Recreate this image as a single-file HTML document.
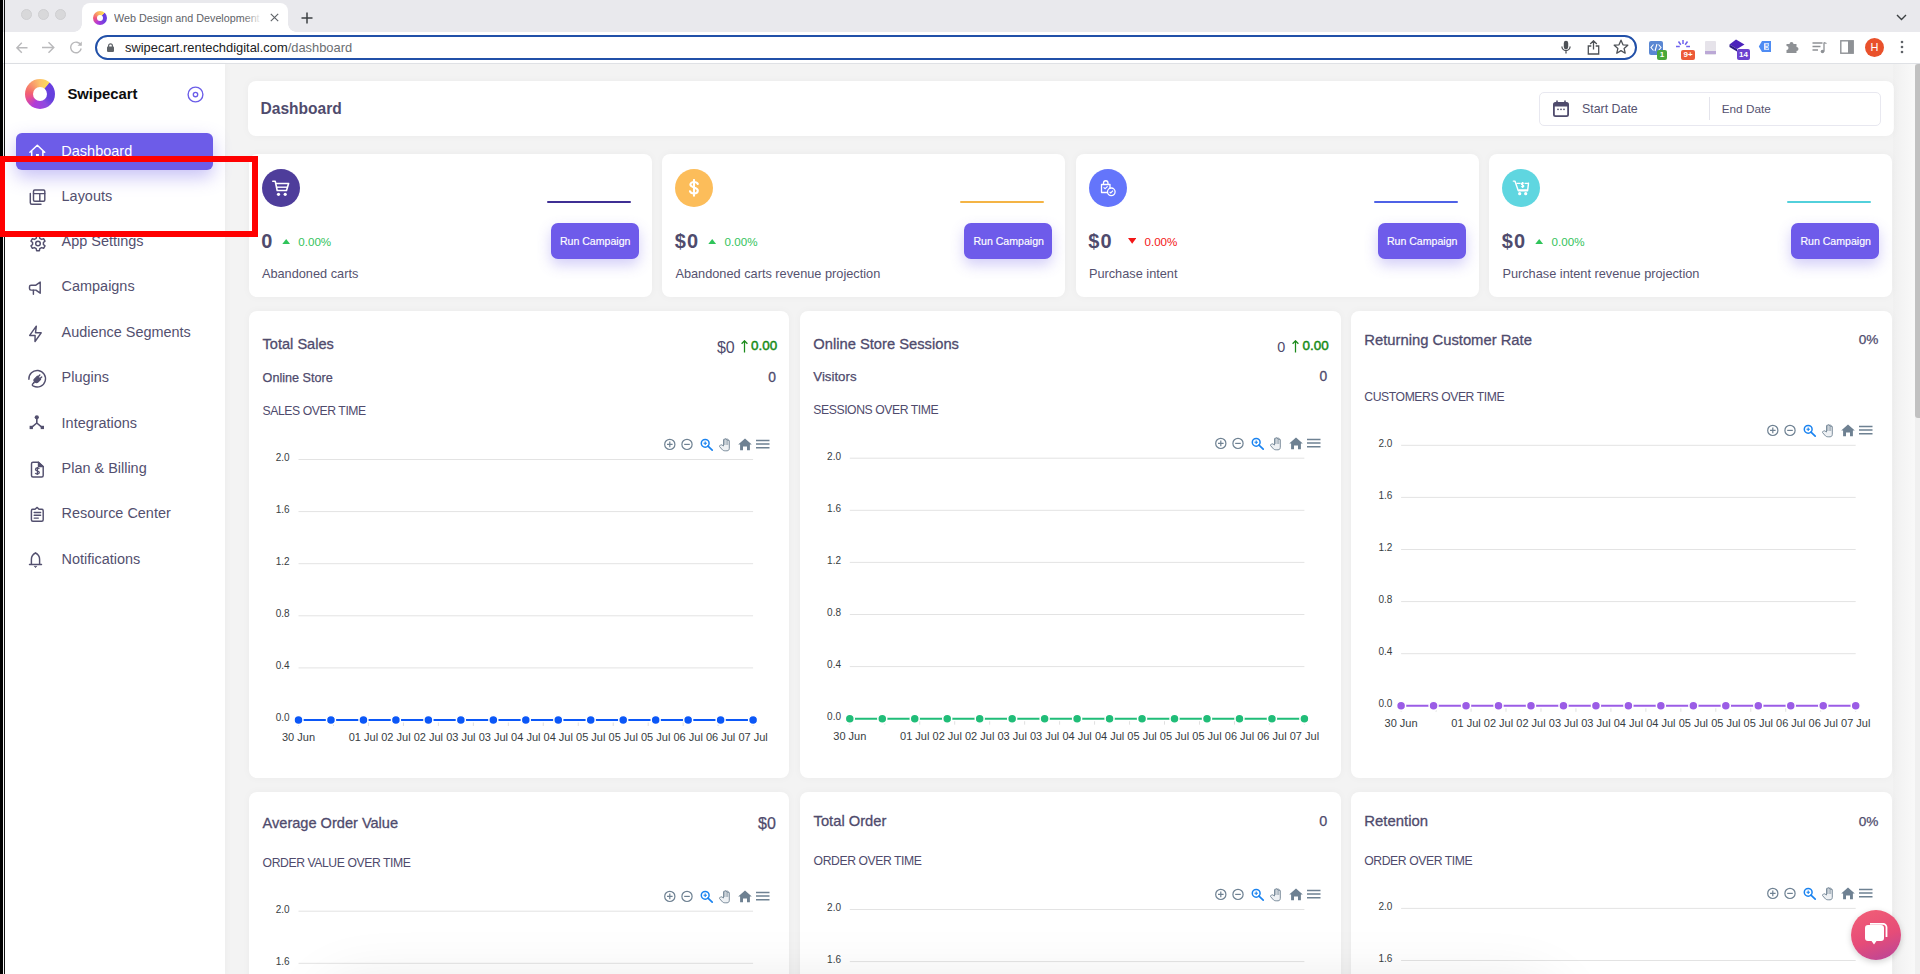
<!DOCTYPE html><html><head><meta charset="utf-8"><style>*{margin:0;padding:0;box-sizing:border-box}
html,body{width:1920px;height:974px;overflow:hidden;background:#f3f3f3;font-family:"Liberation Sans",sans-serif;position:relative}
.card{position:absolute;background:#fff;border-radius:8px;box-shadow:0 0 8px rgba(0,0,0,0.035)}
</style></head><body><div style="position:absolute;left:0;top:0;width:1920px;height:32px;background:#e9e9ed"></div><div style="position:absolute;left:20.5px;top:9px;width:11px;height:11px;border-radius:50%;background:#d8d8da;border:0.5px solid #cfcfd2"></div><div style="position:absolute;left:37.5px;top:9px;width:11px;height:11px;border-radius:50%;background:#d8d8da;border:0.5px solid #cfcfd2"></div><div style="position:absolute;left:54.5px;top:9px;width:11px;height:11px;border-radius:50%;background:#d8d8da;border:0.5px solid #cfcfd2"></div><div style="position:absolute;left:82px;top:3px;width:206px;height:29px;background:#fff;border-radius:8px 8px 0 0"></div>
<div style="position:absolute;left:74px;top:24px;width:8px;height:8px;background:radial-gradient(circle at 0 0,rgba(255,255,255,0) 7.5px,#fff 8px)"></div>
<div style="position:absolute;left:288px;top:24px;width:8px;height:8px;background:radial-gradient(circle at 100% 0,rgba(255,255,255,0) 7.5px,#fff 8px)"></div>
<div style="position:absolute;left:93px;top:11px;width:14px;height:14px;border-radius:50%;background:conic-gradient(#fcc35e 0deg,#fbd95a 40deg,#6a3de0 45deg,#6a3fe0 120deg,#b43ad8 210deg,#f0577a 270deg,#f99a66 320deg,#fcc35e 360deg)"></div>
<div style="position:absolute;left:97px;top:15px;width:6px;height:6px;border-radius:50%;background:#fff"></div>
<div style="position:absolute;left:114.00px;top:10.50px;font:normal 10.75px/14px 'Liberation Sans',sans-serif;color:#5f6368;letter-spacing:0px;white-space:nowrap;width:150px;overflow:hidden">Web Design and Development (</div>
<div style="position:absolute;left:244px;top:8px;width:22px;height:18px;background:linear-gradient(90deg,rgba(255,255,255,0),#fff 80%)"></div><svg style="position:absolute;left:270px;top:13px" width="9" height="9" viewBox="0 0 9 9"><path d="M0.8 0.8L8.2 8.2M8.2 0.8L0.8 8.2" stroke="#5f6368" stroke-width="1.15"/></svg><svg style="position:absolute;left:301px;top:12px" width="12" height="12" viewBox="0 0 12 12"><path d="M6 0.5V11.5M0.5 6H11.5" stroke="#3c4043" stroke-width="1.5"/></svg><svg style="position:absolute;left:1896px;top:14px" width="11" height="7" viewBox="0 0 11 7"><path d="M1 1L5.5 5.5L10 1" stroke="#3c4043" stroke-width="1.4" fill="none"/></svg><div style="position:absolute;left:0;top:32px;width:1920px;height:31px;background:#fff"></div><svg style="position:absolute;left:15.5px;top:41.5px" width="12" height="12" viewBox="0 0 12 12"><path d="M11.5 5.8H1.2M5.8 0.8L0.9 5.8L5.8 10.8" stroke="#b9b9bb" stroke-width="1.4" fill="none"/></svg><svg style="position:absolute;left:41px;top:41px" width="14" height="13" viewBox="0 0 14 13"><path d="M1 6.5H12.5M7.5 1.2L12.8 6.5L7.5 11.8" stroke="#b9b9bb" stroke-width="1.4" fill="none"/></svg><svg style="position:absolute;left:69px;top:40px" width="14" height="14" viewBox="0 0 14 14"><path d="M11.8 5.2A5.3 5.3 0 1 0 12.2 8.5" stroke="#b9b9bb" stroke-width="1.4" fill="none"/><path d="M12.8 1.5V5.8H8.5Z" fill="#b9b9bb"/></svg><div style="position:absolute;left:95px;top:35px;width:1542px;height:25px;border:2px solid #2150a8;border-radius:13px;background:#fff"></div><svg style="position:absolute;left:107.3px;top:43.2px" width="7" height="9" viewBox="0 0 7 9"><rect x="0" y="3.6" width="7" height="5.3" rx="0.8" fill="#5f6368"/><path d="M1.6 4V2.7A1.9 1.9 0 0 1 5.4 2.7V4" stroke="#5f6368" stroke-width="1.2" fill="none"/></svg><div style="position:absolute;left:125.00px;top:39.00px;font:normal 12.9px/17px 'Liberation Sans',sans-serif;color:#4f4b6d;letter-spacing:0px;white-space:nowrap;"><span style="color:#202124">swipecart.rentechdigital.com</span><span style="color:#6b6e72">/dashboard</span></div>
<svg style="position:absolute;left:1561px;top:40px" width="10" height="15" viewBox="0 0 10 15"><rect x="2.8" y="0.7" width="4.4" height="8.6" rx="2.2" fill="#4d5156"/><path d="M0.9 6.4A4.1 4.1 0 0 0 9.1 6.4M5 10.6V13.5" stroke="#4d5156" stroke-width="1.3" fill="none"/></svg><svg style="position:absolute;left:1587px;top:40px" width="13" height="15" viewBox="0 0 13 15"><path d="M6.5 0.8V9.5M3.2 4L6.5 0.8L9.8 4M4.3 6H1.3V14H11.7V6H8.7" stroke="#4d5156" stroke-width="1.3" fill="none"/></svg><svg style="position:absolute;left:1613px;top:39px" width="16" height="16" viewBox="0 0 16 16"><path d="M8 1.2L10 5.8L14.8 6.2L11.1 9.4L12.2 14.2L8 11.6L3.8 14.2L4.9 9.4L1.2 6.2L6 5.8Z" stroke="#4d5156" stroke-width="1.3" fill="none" stroke-linejoin="round"/></svg><div style="position:absolute;left:1649px;top:41px;width:14px;height:14px;background:#5a87d3;border-radius:2px"></div><svg style="position:absolute;left:1650px;top:43px" width="12" height="9" viewBox="0 0 12 9"><path d="M3.5 1.5L1 4.5L3.5 7.5M8.5 1.5L11 4.5L8.5 7.5M7 1L5 8" stroke="#fff" stroke-width="1.1" fill="none"/></svg><div style="position:absolute;left:1657px;top:50px;width:10px;height:10px;background:#4aa83a;border-radius:2px;font:bold 8px/10px Liberation Sans,sans-serif;color:#fff;text-align:center">1</div><svg style="position:absolute;left:1675px;top:39px" width="16" height="14" viewBox="0 0 16 14"><g stroke="#6f63ee" stroke-width="1.5"><path d="M8 1V5M3.5 2.5L5.8 5.8M12.5 2.5L10.2 5.8M1 7.5H4.8M15 7.5H11.2"/></g></svg><div style="position:absolute;left:1681px;top:50px;width:14px;height:10px;background:#ec5a38;border-radius:2px;font:bold 8px/10px Liberation Sans,sans-serif;color:#fff;text-align:center">9+</div><div style="position:absolute;left:1705px;top:41px;width:11px;height:14px;background:#e6e3ea;border-radius:1px"></div><div style="position:absolute;left:1705px;top:51px;width:11px;height:3px;background:#bba8d6"></div><svg style="position:absolute;left:1729px;top:39px" width="16" height="13" viewBox="0 0 16 13"><path d="M7 0.5L15.5 5.5L8 10L0.5 5.5Z" fill="#4b22bb"/><path d="M0.5 5.5L8 10L8 12.5L0.5 8Z" fill="#2c1a82"/></svg><div style="position:absolute;left:1737px;top:49px;width:13px;height:11px;background:#6b42cf;border-radius:2px;font:bold 8px/11px Liberation Sans,sans-serif;color:#fff;text-align:center">14</div><svg style="position:absolute;left:1758px;top:40px" width="14" height="13" viewBox="0 0 14 13"><path d="M4 1H13V12H4L0.8 6.5Z" fill="#4f8cf3"/><rect x="6" y="3.2" width="5" height="6.6" fill="#e8f0fe"/><text x="6.9" y="9" font-size="7" font-family="Liberation Sans" fill="#4f8cf3">5</text></svg><svg style="position:absolute;left:1785px;top:40px" width="14" height="14" viewBox="0 0 14 14"><path d="M1.5 4H4.5A2 2 0 0 1 8.5 4H11.5V7A2 2 0 0 1 11.5 11V13H1.5V10A2 2 0 0 0 1.5 6Z" fill="#8e9195"/></svg><svg style="position:absolute;left:1812px;top:41px" width="15" height="13" viewBox="0 0 15 13"><path d="M0.5 2H10.5M0.5 5.5H8.5M0.5 9H6" stroke="#8e9195" stroke-width="1.3"/><path d="M12 1.5V10.5M12 1.5L14.5 2.5" stroke="#8e9195" stroke-width="1.3"/><circle cx="10.5" cy="10.5" r="1.8" fill="#8e9195"/></svg><svg style="position:absolute;left:1840px;top:40px" width="14" height="14" viewBox="0 0 14 14"><rect x="0.8" y="0.8" width="12.4" height="12.4" stroke="#8e9195" stroke-width="1.4" fill="none"/><rect x="8" y="0.8" width="5.2" height="12.4" fill="#8e9195"/></svg><div style="position:absolute;left:1865px;top:38px;width:19px;height:19px;border-radius:50%;background:#e9512b;color:#fff;font:11px/19px Liberation Sans,sans-serif;text-align:center">H</div><svg style="position:absolute;left:1900px;top:40px" width="4" height="14" viewBox="0 0 4 14"><circle cx="2" cy="2" r="1.3" fill="#5f6368"/><circle cx="2" cy="7" r="1.3" fill="#5f6368"/><circle cx="2" cy="12" r="1.3" fill="#5f6368"/></svg><div style="position:absolute;left:0;top:63px;width:1920px;height:1px;background:#dfe1e5"></div><div style="position:absolute;left:5px;top:64px;width:220px;height:910px;background:#fff;box-shadow:1px 0 6px rgba(0,0,0,0.03)"></div><div style="position:absolute;left:25px;top:79px;width:30px;height:30px;border-radius:50%;background:conic-gradient(#fcc36a 0deg,#fcd95a 38deg,#6a3ee0 42deg,#6340dc 115deg,#8d4be0 150deg,#b13bd8 210deg,#e84f90 250deg,#f4666c 280deg,#f89d6c 325deg,#fcc36a 360deg)"></div><div style="position:absolute;left:32.8px;top:87px;width:14.4px;height:14.4px;border-radius:50%;background:#fff"></div><div style="position:absolute;left:67.40px;top:85.00px;font:bold 14.85px/19px 'Liberation Sans',sans-serif;color:#0d0d0d;letter-spacing:0px;white-space:nowrap;">Swipecart</div>
<svg style="position:absolute;left:187.3px;top:85.5px" width="17" height="17" viewBox="0 0 17 17"><circle cx="8.5" cy="8.5" r="7.4" stroke="#6b5de8" stroke-width="1.35" fill="none"/><circle cx="8.5" cy="8.5" r="2.2" stroke="#6b5de8" stroke-width="1.35" fill="none"/></svg><div style="position:absolute;left:16px;top:133px;width:197px;height:37px;background:#6d5ce8;border-radius:6px;box-shadow:0 7px 18px rgba(108,92,231,0.38)"></div><div style="position:absolute;left:26px;top:138.5px;line-height:0"><svg width="24" height="24" viewBox="0 0 24 24"><path d="M3.9 13.3L11.3 6.2L18.7 13.3M5.7 11.8V20H16.9V11.8" stroke="#fff" stroke-width="1.5" fill="none" stroke-linejoin="round" stroke-linecap="round"/><rect x="10" y="15" width="2.9" height="2.4" fill="#fff"/></svg></div><div style="position:absolute;left:61.30px;top:142.40px;font:normal 14.5px/19px 'Liberation Sans',sans-serif;color:#ffffff;letter-spacing:0px;white-space:nowrap;">Dashboard</div>
<div style="position:absolute;left:26px;top:186px;line-height:0"><svg width="24" height="24" viewBox="0 0 24 24"><rect x="7.5" y="4" width="11.3" height="11.3" rx="1.2" stroke="#53506f" stroke-width="1.45" fill="none" stroke-linecap="round" stroke-linejoin="round"/><path d="M7.5 7.6H18.8M13.8 7.6V15.3M4.3 7.5V16.8A1.5 1.5 0 0 0 5.8 18.3H15" stroke="#53506f" stroke-width="1.45" fill="none" stroke-linecap="round" stroke-linejoin="round"/></svg></div><div style="position:absolute;left:61.60px;top:186.75px;font:normal 14.45px/19px 'Liberation Sans',sans-serif;color:#53506f;letter-spacing:0px;white-space:nowrap;">Layouts</div>
<div style="position:absolute;left:26px;top:234px;line-height:0"><svg width="24" height="24" viewBox="0 0 24 24"><path d="M10.6 2.3H13.4L13.8 4.4L15.6 5.4L17.6 4.7L19 7.1L17.4 8.5V10.5L19 11.9L17.6 14.3L15.6 13.6L13.8 14.6L13.4 16.7H10.6L10.2 14.6L8.4 13.6L6.4 14.3L5 11.9L6.6 10.5V8.5L5 7.1L6.4 4.7L8.4 5.4L10.2 4.4Z" stroke="#53506f" stroke-width="1.45" fill="none" stroke-linecap="round" stroke-linejoin="round"/><circle cx="12" cy="9.5" r="2.3" stroke="#53506f" stroke-width="1.45" fill="none" stroke-linecap="round" stroke-linejoin="round"/></svg></div><div style="position:absolute;left:61.60px;top:232.10px;font:normal 14.45px/19px 'Liberation Sans',sans-serif;color:#53506f;letter-spacing:0px;white-space:nowrap;">App Settings</div>
<div style="position:absolute;left:26px;top:278.7px;line-height:0"><svg width="24" height="24" viewBox="0 0 24 24"><path d="M9.9 6.2L14.2 3.1V14.2L9.9 11.1H5A1.5 1.5 0 0 1 3.5 9.6V7.7A1.5 1.5 0 0 1 5 6.2Z" stroke="#53506f" stroke-width="1.45" fill="none" stroke-linecap="round" stroke-linejoin="round"/><path d="M7.4 11.3V15.2" stroke="#53506f" stroke-width="1.45" fill="none" stroke-linecap="round" stroke-linejoin="round"/></svg></div><div style="position:absolute;left:61.60px;top:277.45px;font:normal 14.45px/19px 'Liberation Sans',sans-serif;color:#53506f;letter-spacing:0px;white-space:nowrap;">Campaigns</div>
<div style="position:absolute;left:26px;top:322px;line-height:0"><svg width="24" height="24" viewBox="0 0 24 24"><path d="M10.3 4.2L3.7 13.4H9.1L9 19.5L15.2 10.8H9.5Z" stroke="#53506f" stroke-width="1.45" fill="none" stroke-linecap="round" stroke-linejoin="round"/></svg></div><div style="position:absolute;left:61.60px;top:322.80px;font:normal 14.45px/19px 'Liberation Sans',sans-serif;color:#53506f;letter-spacing:0px;white-space:nowrap;">Audience Segments</div>
<div style="position:absolute;left:26px;top:367px;line-height:0"><svg width="24" height="24" viewBox="0 0 24 24"><path d="M2.9 12.3A8.3 8.3 0 1 1 7.5 19.2C6 18.5 5.8 17.5 7.6 16" stroke="#53506f" stroke-width="1.45" fill="none" stroke-linecap="round" stroke-linejoin="round"/><path d="M8 12.6L11.4 9.2L14.6 12.4L12.2 14.8C11.2 15.8 9.8 15.8 8.8 14.8C7.9 13.9 7.6 13.1 8 12.6Z" fill="#53506f" stroke="#53506f" stroke-width="1.2" stroke-linejoin="round"/><path d="M12.2 9.8L13.8 8.1M14 11.6L15.7 9.9" stroke="#53506f" stroke-width="1.45" fill="none" stroke-linecap="round" stroke-linejoin="round"/><path d="M8.6 14.6L7.6 16" stroke="#53506f" stroke-width="1.45" fill="none" stroke-linecap="round" stroke-linejoin="round"/></svg></div><div style="position:absolute;left:61.60px;top:368.15px;font:normal 14.45px/19px 'Liberation Sans',sans-serif;color:#53506f;letter-spacing:0px;white-space:nowrap;">Plugins</div>
<div style="position:absolute;left:26px;top:411.5px;line-height:0"><svg width="24" height="24" viewBox="0 0 24 24"><circle cx="10.8" cy="5.3" r="2.1" fill="#53506f"/><path d="M10.8 7V11L5.6 15.3M10.8 11L16 15.3" stroke="#53506f" stroke-width="1.6" fill="none" stroke-linejoin="round"/><rect x="3.6" y="13.8" width="3.3" height="3.3" fill="#53506f"/><rect x="14.7" y="13.8" width="3.3" height="3.3" fill="#53506f"/></svg></div><div style="position:absolute;left:61.60px;top:413.50px;font:normal 14.45px/19px 'Liberation Sans',sans-serif;color:#53506f;letter-spacing:0px;white-space:nowrap;">Integrations</div>
<div style="position:absolute;left:26px;top:458px;line-height:0"><svg width="24" height="24" viewBox="0 0 24 24"><path d="M5.5 5.7A1.5 1.5 0 0 1 7 4.2H12.4L17.2 8.6V17.5A1.5 1.5 0 0 1 15.7 19H7A1.5 1.5 0 0 1 5.5 17.5Z" stroke="#53506f" stroke-width="1.45" fill="none" stroke-linecap="round" stroke-linejoin="round"/><path d="M12.4 4.2V8.6H17.2Z" fill="#53506f" stroke="#53506f" stroke-width="1.2" stroke-linejoin="round"/><path d="M13.3 10.9C12.9 10.2 12.3 9.9 11.4 9.9C10.3 9.9 9.5 10.5 9.5 11.4C9.5 13.4 13.3 12.4 13.3 14.5C13.3 15.4 12.5 16 11.3 16C10.3 16 9.6 15.6 9.3 15M11.4 9V16.9" stroke="#53506f" stroke-width="1.3" fill="none"/></svg></div><div style="position:absolute;left:61.60px;top:458.85px;font:normal 14.45px/19px 'Liberation Sans',sans-serif;color:#53506f;letter-spacing:0px;white-space:nowrap;">Plan &amp; Billing</div>
<div style="position:absolute;left:26px;top:503px;line-height:0"><svg width="24" height="24" viewBox="0 0 24 24"><path d="M9 6.3L11.2 4.4L13 6.3H15.7A1.5 1.5 0 0 1 17.2 7.8V16.8A1.5 1.5 0 0 1 15.7 18.3H6.9A1.5 1.5 0 0 1 5.4 16.8V7.8A1.5 1.5 0 0 1 6.9 6.3Z" stroke="#53506f" stroke-width="1.45" fill="none" stroke-linecap="round" stroke-linejoin="round"/><path d="M8.2 9.5H14.6M8.2 12.3H14.6M8.2 15.1H12.3" stroke="#53506f" stroke-width="1.45" fill="none" stroke-linecap="round" stroke-linejoin="round"/></svg></div><div style="position:absolute;left:61.60px;top:504.20px;font:normal 14.45px/19px 'Liberation Sans',sans-serif;color:#53506f;letter-spacing:0px;white-space:nowrap;">Resource Center</div>
<div style="position:absolute;left:26px;top:548px;line-height:0"><svg width="24" height="24" viewBox="0 0 24 24"><path d="M5.4 16.3V11.2C5.4 8.3 7 6.3 9.5 5C12 6.3 13.6 8.3 13.6 11.2V16.3M3.5 16.5H15.5" stroke="#53506f" stroke-width="1.45" fill="none" stroke-linecap="round" stroke-linejoin="round"/><path d="M9.5 4.2L10.5 5.5H8.5Z" fill="#53506f"/><path d="M8.3 18.4H10.7L9.5 19.6Z" fill="#53506f" stroke="#53506f" stroke-width="0.8" stroke-linejoin="round"/></svg></div><div style="position:absolute;left:61.60px;top:549.55px;font:normal 14.45px/19px 'Liberation Sans',sans-serif;color:#53506f;letter-spacing:0px;white-space:nowrap;">Notifications</div>
<div class="card" style="left:248px;top:81px;width:1646px;height:55px"></div><div style="position:absolute;left:260.50px;top:99.40px;font:bold 15.57px/20px 'Liberation Sans',sans-serif;color:#4f4b6d;letter-spacing:0px;white-space:nowrap;">Dashboard</div>
<div style="position:absolute;left:1539.4px;top:91.5px;width:342px;height:34px;border:1px solid #e8e8f0;border-radius:5px"></div><svg style="position:absolute;left:1553.4px;top:99.8px" width="16" height="17" viewBox="0 0 16 17"><rect x="0.9" y="2.9" width="14.2" height="13.2" rx="1.6" stroke="#4f4b6d" stroke-width="1.8" fill="none"/><rect x="0.9" y="2.9" width="14.2" height="3.6" fill="#4f4b6d"/><path d="M4 0.5V3.5M12 0.5V3.5" stroke="#4f4b6d" stroke-width="1.6"/><circle cx="5" cy="9.3" r="0.85" fill="#4f4b6d"/><circle cx="8" cy="9.3" r="0.85" fill="#4f4b6d"/><circle cx="11" cy="9.3" r="0.85" fill="#4f4b6d"/></svg><div style="position:absolute;left:1582.00px;top:100.80px;font:normal 12.39px/16px 'Liberation Sans',sans-serif;color:#55526f;letter-spacing:0px;white-space:nowrap;">Start Date</div>
<div style="position:absolute;left:1709.2px;top:97px;width:1px;height:23px;background:#e4e4ec"></div><div style="position:absolute;left:1721.75px;top:101.30px;font:normal 11.76px/15px 'Liberation Sans',sans-serif;color:#55526f;letter-spacing:0px;white-space:nowrap;">End Date</div>
<div class="card" style="left:248.5px;top:154px;width:403.2px;height:142.5px"></div>
<div style="position:absolute;left:261.5px;top:169px;width:38.4px;height:38.4px;border-radius:50%;background:#4e3d9b;display:flex;align-items:center;justify-content:center"><svg width="18" height="17" viewBox="0 0 18 17"><path d="M0.8 1.2H3.2L5.2 10.5H14.5L16.6 3.5H4.2" stroke="#fff" stroke-width="1.6" fill="none" stroke-linejoin="round" stroke-linecap="round"/><path d="M4.6 7.2H15.4" stroke="#fff" stroke-width="1.4"/><circle cx="6.5" cy="14.3" r="1.6" fill="#fff"/><circle cx="13.2" cy="14.3" r="1.6" fill="#fff"/></svg></div>
<div style="position:absolute;left:546.5px;top:200.8px;width:84px;height:1.9px;background:#3f2f94;border-radius:1px"></div>
<div style="position:absolute;left:261.30px;top:228.30px;font:bold 20px/26px 'Liberation Sans',sans-serif;color:#4f4b6d;letter-spacing:1.1px;white-space:nowrap;">0</div>
<svg style="position:absolute;left:281.90px;top:238.8px" width="8.4" height="5.4" viewBox="0 0 8.4 5.4"><path d="M0 5.4L4.2 0L8.4 5.4Z" fill="#2fc45a"/></svg><div style="position:absolute;left:298.30px;top:233.80px;font:normal 11.6px/15px 'Liberation Sans',sans-serif;color:#34c35c;letter-spacing:0px;white-space:nowrap;">0.00%</div>
<div style="position:absolute;left:550.90px;top:223px;width:87.8px;height:36.4px;background:#6e5bea;border-radius:7px;box-shadow:0 6px 14px rgba(108,92,231,0.30)"></div>
<div style="position:absolute;left:559.90px;top:234.10px;font:normal 10.58px/14px 'Liberation Sans',sans-serif;color:#ffffff;letter-spacing:0px;white-space:nowrap;-webkit-text-stroke:0.15px #ffffff;">Run Campaign</div>
<div style="position:absolute;left:261.90px;top:265.35px;font:normal 12.75px/17px 'Liberation Sans',sans-serif;color:#55526f;letter-spacing:0px;white-space:nowrap;">Abandoned carts</div>
<div class="card" style="left:662.0px;top:154px;width:403.2px;height:142.5px"></div>
<div style="position:absolute;left:675.0px;top:169px;width:38.4px;height:38.4px;border-radius:50%;background:#fcbd5a;display:flex;align-items:center;justify-content:center"><svg width="12" height="18" viewBox="0 0 12 18"><path d="M9.8 5C9.3 3.7 8 3 6 3C3.8 3 2.4 4.1 2.4 5.6C2.4 9.2 9.8 7.6 9.8 11.6C9.8 13.3 8.2 14.5 6 14.5C3.8 14.5 2.4 13.6 2 12.3M6 1V16.8" stroke="#fff" stroke-width="2.1" fill="none" stroke-linecap="round"/></svg></div>
<div style="position:absolute;left:960.0px;top:200.8px;width:84px;height:1.9px;background:#f4b445;border-radius:1px"></div>
<div style="position:absolute;left:674.80px;top:228.30px;font:bold 20px/26px 'Liberation Sans',sans-serif;color:#4f4b6d;letter-spacing:1.1px;white-space:nowrap;">$0</div>
<svg style="position:absolute;left:708.20px;top:238.8px" width="8.4" height="5.4" viewBox="0 0 8.4 5.4"><path d="M0 5.4L4.2 0L8.4 5.4Z" fill="#2fc45a"/></svg><div style="position:absolute;left:724.60px;top:233.80px;font:normal 11.6px/15px 'Liberation Sans',sans-serif;color:#34c35c;letter-spacing:0px;white-space:nowrap;">0.00%</div>
<div style="position:absolute;left:964.40px;top:223px;width:87.8px;height:36.4px;background:#6e5bea;border-radius:7px;box-shadow:0 6px 14px rgba(108,92,231,0.30)"></div>
<div style="position:absolute;left:973.40px;top:234.10px;font:normal 10.58px/14px 'Liberation Sans',sans-serif;color:#ffffff;letter-spacing:0px;white-space:nowrap;-webkit-text-stroke:0.15px #ffffff;">Run Campaign</div>
<div style="position:absolute;left:675.40px;top:265.35px;font:normal 12.75px/17px 'Liberation Sans',sans-serif;color:#55526f;letter-spacing:0px;white-space:nowrap;">Abandoned carts revenue projection</div>
<div class="card" style="left:1075.5px;top:154px;width:403.2px;height:142.5px"></div>
<div style="position:absolute;left:1088.5px;top:169px;width:38.4px;height:38.4px;border-radius:50%;background:#6475fb;display:flex;align-items:center;justify-content:center"><svg width="18" height="18" viewBox="0 0 18 18"><path d="M2.5 5.5H11V13.5H2.5Z" stroke="#fff" stroke-width="1.3" fill="none" stroke-linejoin="round"/><path d="M4.5 5.5V4A2.2 2.2 0 0 1 9 4V5.5" stroke="#fff" stroke-width="1.3" fill="none"/><path d="M4.6 8.4L6.1 9.7L8.6 7.4" stroke="#fff" stroke-width="1.2" fill="none"/><circle cx="12.3" cy="12.8" r="3.8" fill="#6475fb" stroke="#fff" stroke-width="1.3"/><path d="M10.6 12.8L11.8 14L14 11.7" stroke="#fff" stroke-width="1.2" fill="none"/></svg></div>
<div style="position:absolute;left:1373.5px;top:200.8px;width:84px;height:1.9px;background:#4f62e6;border-radius:1px"></div>
<div style="position:absolute;left:1088.30px;top:228.30px;font:bold 20px/26px 'Liberation Sans',sans-serif;color:#4f4b6d;letter-spacing:1.1px;white-space:nowrap;">$0</div>
<svg style="position:absolute;left:1128.10px;top:238px" width="8.4" height="5.8" viewBox="0 0 8.4 5.8"><path d="M0 0L4.2 5.8L8.4 0Z" fill="#f31616"/></svg><div style="position:absolute;left:1144.50px;top:233.80px;font:normal 11.6px/15px 'Liberation Sans',sans-serif;color:#f31616;letter-spacing:0px;white-space:nowrap;">0.00%</div>
<div style="position:absolute;left:1377.90px;top:223px;width:87.8px;height:36.4px;background:#6e5bea;border-radius:7px;box-shadow:0 6px 14px rgba(108,92,231,0.30)"></div>
<div style="position:absolute;left:1386.90px;top:234.10px;font:normal 10.58px/14px 'Liberation Sans',sans-serif;color:#ffffff;letter-spacing:0px;white-space:nowrap;-webkit-text-stroke:0.15px #ffffff;">Run Campaign</div>
<div style="position:absolute;left:1088.90px;top:265.35px;font:normal 12.75px/17px 'Liberation Sans',sans-serif;color:#55526f;letter-spacing:0px;white-space:nowrap;">Purchase intent</div>
<div class="card" style="left:1489.0px;top:154px;width:403.2px;height:142.5px"></div>
<div style="position:absolute;left:1502.0px;top:169px;width:38.4px;height:38.4px;border-radius:50%;background:#5fd6e0;display:flex;align-items:center;justify-content:center"><svg width="18" height="18" viewBox="0 0 18 18"><path d="M1.3 2.1H2.9L6.3 11.7H15.6L16.5 4.3" stroke="#fff" stroke-width="1.4" fill="none" stroke-linejoin="round" stroke-linecap="round"/><path d="M4.4 4.3H8.6M12.6 4.3H16.5M6.4 10.9H15.6" stroke="#fff" stroke-width="1.2"/><circle cx="7.7" cy="14.7" r="1.6" fill="#fff"/><circle cx="13.7" cy="14.7" r="1.6" fill="#fff"/><path d="M11.8 4.6C11.6 4.1 11.2 3.9 10.6 3.9C9.9 3.9 9.4 4.3 9.4 4.9C9.4 6.2 11.9 5.6 11.9 7C11.9 7.6 11.3 8 10.6 8C10 8 9.5 7.8 9.3 7.3M10.6 2.9V9" stroke="#fff" stroke-width="1.1" fill="none"/></svg></div>
<div style="position:absolute;left:1787.0px;top:200.8px;width:84px;height:1.9px;background:#52d0db;border-radius:1px"></div>
<div style="position:absolute;left:1501.80px;top:228.30px;font:bold 20px/26px 'Liberation Sans',sans-serif;color:#4f4b6d;letter-spacing:1.1px;white-space:nowrap;">$0</div>
<svg style="position:absolute;left:1535.20px;top:238.8px" width="8.4" height="5.4" viewBox="0 0 8.4 5.4"><path d="M0 5.4L4.2 0L8.4 5.4Z" fill="#2fc45a"/></svg><div style="position:absolute;left:1551.60px;top:233.80px;font:normal 11.6px/15px 'Liberation Sans',sans-serif;color:#34c35c;letter-spacing:0px;white-space:nowrap;">0.00%</div>
<div style="position:absolute;left:1791.40px;top:223px;width:87.8px;height:36.4px;background:#6e5bea;border-radius:7px;box-shadow:0 6px 14px rgba(108,92,231,0.30)"></div>
<div style="position:absolute;left:1800.40px;top:234.10px;font:normal 10.58px/14px 'Liberation Sans',sans-serif;color:#ffffff;letter-spacing:0px;white-space:nowrap;-webkit-text-stroke:0.15px #ffffff;">Run Campaign</div>
<div style="position:absolute;left:1502.40px;top:265.35px;font:normal 12.75px/17px 'Liberation Sans',sans-serif;color:#55526f;letter-spacing:0px;white-space:nowrap;">Purchase intent revenue projection</div>
<div class="card" style="left:248.5px;top:311px;width:540.8px;height:467px"></div>
<div class="card" style="left:248.5px;top:792px;width:540.8px;height:300px"></div>
<div class="card" style="left:799.8px;top:311px;width:540.8px;height:467px"></div>
<div class="card" style="left:799.8px;top:792px;width:540.8px;height:300px"></div>
<div class="card" style="left:1351.1px;top:311px;width:540.8px;height:467px"></div>
<div class="card" style="left:1351.1px;top:792px;width:540.8px;height:300px"></div>
<div style="position:absolute;left:262.60px;top:334.90px;font:normal 14.57px/19px 'Liberation Sans',sans-serif;color:#4f4b6d;letter-spacing:0px;white-space:nowrap;-webkit-text-stroke:0.3px #4f4b6d;">Total Sales</div>
<div style="position:absolute;left:716.90px;top:336.90px;font:normal 16.0px/21px 'Liberation Sans',sans-serif;color:#4f4b6d;letter-spacing:0px;white-space:nowrap;">$0</div>
<svg style="position:absolute;left:740.90px;top:339.90px" width="7" height="13" viewBox="0 0 7 13"><path d="M3.5 12.5V1M0.6 3.8L3.5 0.8L6.4 3.8" stroke="#1a8a1a" stroke-width="1.25" fill="none"/></svg><div style="position:absolute;left:751.10px;top:337.35px;font:normal 13.41px/17px 'Liberation Sans',sans-serif;color:#148a14;letter-spacing:0px;white-space:nowrap;-webkit-text-stroke:0.45px #148a14;">0.00</div>
<div style="position:absolute;left:262.60px;top:369.75px;font:normal 12.61px/16px 'Liberation Sans',sans-serif;color:#4f4b6d;letter-spacing:0px;white-space:nowrap;-webkit-text-stroke:0.25px #4f4b6d;">Online Store</div>
<div style="position:absolute;right:1144.20px;top:369.10px;font:normal 13.8px/18px 'Liberation Sans',sans-serif;color:#4f4b6d;letter-spacing:0px;white-space:nowrap;-webkit-text-stroke:0.3px #4f4b6d;">0</div>
<div style="position:absolute;left:262.60px;top:403.10px;font:normal 12.2px/16px 'Liberation Sans',sans-serif;color:#4f4b6d;letter-spacing:-0.42px;white-space:nowrap;">SALES OVER TIME</div>
<svg style="position:absolute;left:664.10px;top:438.00px" width="108" height="15" viewBox="0 0 108 15">
<circle cx="5.8" cy="6.4" r="5.1" stroke="#6e8192" stroke-width="1.2" fill="none"/><path d="M5.8 3.6V9.2M3 6.4H8.6" stroke="#6e8192" stroke-width="1.2"/>
<circle cx="23" cy="6.4" r="5.1" stroke="#6e8192" stroke-width="1.2" fill="none"/><path d="M20.2 6.4H25.8" stroke="#6e8192" stroke-width="1.2"/>
<circle cx="41.2" cy="5.3" r="3.9" stroke="#1a83f0" stroke-width="1.5" fill="none"/><path d="M44 8.2L48.2 12.2" stroke="#1a83f0" stroke-width="1.7" stroke-linecap="round"/><path d="M41.2 3.6V7M39.5 5.3H42.9" stroke="#1a83f0" stroke-width="1.1"/>
<path d="M55.5 8.5L57.8 11.2C58.8 12.5 59.8 12.8 61.2 12.8H63C64.5 12.8 65.3 11.8 65.3 10.3V2.8C65.3 1.8 64 1.8 64 2.8V1.8C64 0.8 62.5 0.8 62.5 1.8V1.3C62.5 0.3 61 0.3 61 1.3V1.8C61 0.8 59.5 0.8 59.5 1.8V8L58 7C57 6.3 55.5 7.3 55.5 8.5Z" stroke="#6e8192" stroke-width="0.9" fill="#eef1f4"/>
<path d="M60.7 2V7M62.2 1.5V7M63.7 2V7" stroke="#6e8192" stroke-width="0.6"/>
<path d="M74.2 6.6L81 0.6L87.8 6.6H85.9V12.3H83V8.6H79V12.3H76.1V6.6Z" fill="#6e8192"/>
<path d="M92 2.4H105.5M92 6.1H105.5M92 9.8H105.5" stroke="#6e8192" stroke-width="1.5"/>
</svg><svg style="position:absolute;left:0;top:0;overflow:visible" width="1" height="1"><line x1="298.50" y1="459.50" x2="753.10" y2="459.50" stroke="#e3e3e3" stroke-width="1"/><text x="289.70" y="460.80" text-anchor="end" font-size="10" font-family="Liberation Sans" fill="#373d3f">2.0</text><line x1="298.50" y1="511.60" x2="753.10" y2="511.60" stroke="#e3e3e3" stroke-width="1"/><text x="289.70" y="512.90" text-anchor="end" font-size="10" font-family="Liberation Sans" fill="#373d3f">1.6</text><line x1="298.50" y1="563.70" x2="753.10" y2="563.70" stroke="#e3e3e3" stroke-width="1"/><text x="289.70" y="565.00" text-anchor="end" font-size="10" font-family="Liberation Sans" fill="#373d3f">1.2</text><line x1="298.50" y1="615.80" x2="753.10" y2="615.80" stroke="#e3e3e3" stroke-width="1"/><text x="289.70" y="617.10" text-anchor="end" font-size="10" font-family="Liberation Sans" fill="#373d3f">0.8</text><line x1="298.50" y1="667.90" x2="753.10" y2="667.90" stroke="#e3e3e3" stroke-width="1"/><text x="289.70" y="669.20" text-anchor="end" font-size="10" font-family="Liberation Sans" fill="#373d3f">0.4</text><text x="289.70" y="721.30" text-anchor="end" font-size="10" font-family="Liberation Sans" fill="#373d3f">0.0</text><line x1="298.50" y1="722.50" x2="298.50" y2="726.00" stroke="#e0e0e0" stroke-width="1"/><line x1="333.47" y1="722.50" x2="333.47" y2="726.00" stroke="#e0e0e0" stroke-width="1"/><line x1="368.44" y1="722.50" x2="368.44" y2="726.00" stroke="#e0e0e0" stroke-width="1"/><line x1="403.41" y1="722.50" x2="403.41" y2="726.00" stroke="#e0e0e0" stroke-width="1"/><line x1="438.38" y1="722.50" x2="438.38" y2="726.00" stroke="#e0e0e0" stroke-width="1"/><line x1="473.35" y1="722.50" x2="473.35" y2="726.00" stroke="#e0e0e0" stroke-width="1"/><line x1="508.32" y1="722.50" x2="508.32" y2="726.00" stroke="#e0e0e0" stroke-width="1"/><line x1="543.28" y1="722.50" x2="543.28" y2="726.00" stroke="#e0e0e0" stroke-width="1"/><line x1="578.25" y1="722.50" x2="578.25" y2="726.00" stroke="#e0e0e0" stroke-width="1"/><line x1="613.22" y1="722.50" x2="613.22" y2="726.00" stroke="#e0e0e0" stroke-width="1"/><line x1="648.19" y1="722.50" x2="648.19" y2="726.00" stroke="#e0e0e0" stroke-width="1"/><line x1="683.16" y1="722.50" x2="683.16" y2="726.00" stroke="#e0e0e0" stroke-width="1"/><line x1="718.13" y1="722.50" x2="718.13" y2="726.00" stroke="#e0e0e0" stroke-width="1"/><line x1="753.10" y1="722.50" x2="753.10" y2="726.00" stroke="#e0e0e0" stroke-width="1"/><line x1="298.50" y1="720.00" x2="753.10" y2="720.00" stroke="#0b57f7" stroke-width="2"/><circle cx="298.50" cy="720.00" r="4.5" fill="#0b57f7" stroke="#fff" stroke-width="1.5"/><text x="298.50" y="741.40" text-anchor="middle" font-size="11" font-family="Liberation Sans" fill="#373d3f">30 Jun</text><circle cx="330.97" cy="720.00" r="4.5" fill="#0b57f7" stroke="#fff" stroke-width="1.5"/><circle cx="363.44" cy="720.00" r="4.5" fill="#0b57f7" stroke="#fff" stroke-width="1.5"/><text x="363.44" y="741.40" text-anchor="middle" font-size="11" font-family="Liberation Sans" fill="#373d3f">01 Jul</text><circle cx="395.91" cy="720.00" r="4.5" fill="#0b57f7" stroke="#fff" stroke-width="1.5"/><text x="395.91" y="741.40" text-anchor="middle" font-size="11" font-family="Liberation Sans" fill="#373d3f">02 Jul</text><circle cx="428.39" cy="720.00" r="4.5" fill="#0b57f7" stroke="#fff" stroke-width="1.5"/><text x="428.39" y="741.40" text-anchor="middle" font-size="11" font-family="Liberation Sans" fill="#373d3f">02 Jul</text><circle cx="460.86" cy="720.00" r="4.5" fill="#0b57f7" stroke="#fff" stroke-width="1.5"/><text x="460.86" y="741.40" text-anchor="middle" font-size="11" font-family="Liberation Sans" fill="#373d3f">03 Jul</text><circle cx="493.33" cy="720.00" r="4.5" fill="#0b57f7" stroke="#fff" stroke-width="1.5"/><text x="493.33" y="741.40" text-anchor="middle" font-size="11" font-family="Liberation Sans" fill="#373d3f">03 Jul</text><circle cx="525.80" cy="720.00" r="4.5" fill="#0b57f7" stroke="#fff" stroke-width="1.5"/><text x="525.80" y="741.40" text-anchor="middle" font-size="11" font-family="Liberation Sans" fill="#373d3f">04 Jul</text><circle cx="558.27" cy="720.00" r="4.5" fill="#0b57f7" stroke="#fff" stroke-width="1.5"/><text x="558.27" y="741.40" text-anchor="middle" font-size="11" font-family="Liberation Sans" fill="#373d3f">04 Jul</text><circle cx="590.74" cy="720.00" r="4.5" fill="#0b57f7" stroke="#fff" stroke-width="1.5"/><text x="590.74" y="741.40" text-anchor="middle" font-size="11" font-family="Liberation Sans" fill="#373d3f">05 Jul</text><circle cx="623.21" cy="720.00" r="4.5" fill="#0b57f7" stroke="#fff" stroke-width="1.5"/><text x="623.21" y="741.40" text-anchor="middle" font-size="11" font-family="Liberation Sans" fill="#373d3f">05 Jul</text><circle cx="655.69" cy="720.00" r="4.5" fill="#0b57f7" stroke="#fff" stroke-width="1.5"/><text x="655.69" y="741.40" text-anchor="middle" font-size="11" font-family="Liberation Sans" fill="#373d3f">05 Jul</text><circle cx="688.16" cy="720.00" r="4.5" fill="#0b57f7" stroke="#fff" stroke-width="1.5"/><text x="688.16" y="741.40" text-anchor="middle" font-size="11" font-family="Liberation Sans" fill="#373d3f">06 Jul</text><circle cx="720.63" cy="720.00" r="4.5" fill="#0b57f7" stroke="#fff" stroke-width="1.5"/><text x="720.63" y="741.40" text-anchor="middle" font-size="11" font-family="Liberation Sans" fill="#373d3f">06 Jul</text><circle cx="753.10" cy="720.00" r="4.5" fill="#0b57f7" stroke="#fff" stroke-width="1.5"/><text x="753.10" y="741.40" text-anchor="middle" font-size="11" font-family="Liberation Sans" fill="#373d3f">07 Jul</text></svg><div style="position:absolute;left:813.30px;top:334.50px;font:normal 14.72px/19px 'Liberation Sans',sans-serif;color:#4f4b6d;letter-spacing:0px;white-space:nowrap;-webkit-text-stroke:0.3px #4f4b6d;">Online Store Sessions</div>
<div style="position:absolute;left:1277.30px;top:337.75px;font:normal 14.4px/19px 'Liberation Sans',sans-serif;color:#4f4b6d;letter-spacing:0px;white-space:nowrap;">0</div>
<svg style="position:absolute;left:1291.90px;top:339.90px" width="7" height="13" viewBox="0 0 7 13"><path d="M3.5 12.5V1M0.6 3.8L3.5 0.8L6.4 3.8" stroke="#1a8a1a" stroke-width="1.25" fill="none"/></svg><div style="position:absolute;left:1302.50px;top:337.35px;font:normal 13.41px/17px 'Liberation Sans',sans-serif;color:#148a14;letter-spacing:0px;white-space:nowrap;-webkit-text-stroke:0.45px #148a14;">0.00</div>
<div style="position:absolute;left:813.30px;top:368.20px;font:normal 13.27px/17px 'Liberation Sans',sans-serif;color:#4f4b6d;letter-spacing:0px;white-space:nowrap;-webkit-text-stroke:0.25px #4f4b6d;">Visitors</div>
<div style="position:absolute;right:592.80px;top:368.30px;font:normal 13.8px/18px 'Liberation Sans',sans-serif;color:#4f4b6d;letter-spacing:0px;white-space:nowrap;-webkit-text-stroke:0.3px #4f4b6d;">0</div>
<div style="position:absolute;left:813.30px;top:401.80px;font:normal 12.2px/16px 'Liberation Sans',sans-serif;color:#4f4b6d;letter-spacing:-0.42px;white-space:nowrap;">SESSIONS OVER TIME</div>
<svg style="position:absolute;left:1215.40px;top:436.70px" width="108" height="15" viewBox="0 0 108 15">
<circle cx="5.8" cy="6.4" r="5.1" stroke="#6e8192" stroke-width="1.2" fill="none"/><path d="M5.8 3.6V9.2M3 6.4H8.6" stroke="#6e8192" stroke-width="1.2"/>
<circle cx="23" cy="6.4" r="5.1" stroke="#6e8192" stroke-width="1.2" fill="none"/><path d="M20.2 6.4H25.8" stroke="#6e8192" stroke-width="1.2"/>
<circle cx="41.2" cy="5.3" r="3.9" stroke="#1a83f0" stroke-width="1.5" fill="none"/><path d="M44 8.2L48.2 12.2" stroke="#1a83f0" stroke-width="1.7" stroke-linecap="round"/><path d="M41.2 3.6V7M39.5 5.3H42.9" stroke="#1a83f0" stroke-width="1.1"/>
<path d="M55.5 8.5L57.8 11.2C58.8 12.5 59.8 12.8 61.2 12.8H63C64.5 12.8 65.3 11.8 65.3 10.3V2.8C65.3 1.8 64 1.8 64 2.8V1.8C64 0.8 62.5 0.8 62.5 1.8V1.3C62.5 0.3 61 0.3 61 1.3V1.8C61 0.8 59.5 0.8 59.5 1.8V8L58 7C57 6.3 55.5 7.3 55.5 8.5Z" stroke="#6e8192" stroke-width="0.9" fill="#eef1f4"/>
<path d="M60.7 2V7M62.2 1.5V7M63.7 2V7" stroke="#6e8192" stroke-width="0.6"/>
<path d="M74.2 6.6L81 0.6L87.8 6.6H85.9V12.3H83V8.6H79V12.3H76.1V6.6Z" fill="#6e8192"/>
<path d="M92 2.4H105.5M92 6.1H105.5M92 9.8H105.5" stroke="#6e8192" stroke-width="1.5"/>
</svg><svg style="position:absolute;left:0;top:0;overflow:visible" width="1" height="1"><line x1="849.80" y1="458.20" x2="1304.40" y2="458.20" stroke="#e3e3e3" stroke-width="1"/><text x="841.00" y="459.50" text-anchor="end" font-size="10" font-family="Liberation Sans" fill="#373d3f">2.0</text><line x1="849.80" y1="510.30" x2="1304.40" y2="510.30" stroke="#e3e3e3" stroke-width="1"/><text x="841.00" y="511.60" text-anchor="end" font-size="10" font-family="Liberation Sans" fill="#373d3f">1.6</text><line x1="849.80" y1="562.40" x2="1304.40" y2="562.40" stroke="#e3e3e3" stroke-width="1"/><text x="841.00" y="563.70" text-anchor="end" font-size="10" font-family="Liberation Sans" fill="#373d3f">1.2</text><line x1="849.80" y1="614.50" x2="1304.40" y2="614.50" stroke="#e3e3e3" stroke-width="1"/><text x="841.00" y="615.80" text-anchor="end" font-size="10" font-family="Liberation Sans" fill="#373d3f">0.8</text><line x1="849.80" y1="666.60" x2="1304.40" y2="666.60" stroke="#e3e3e3" stroke-width="1"/><text x="841.00" y="667.90" text-anchor="end" font-size="10" font-family="Liberation Sans" fill="#373d3f">0.4</text><text x="841.00" y="720.00" text-anchor="end" font-size="10" font-family="Liberation Sans" fill="#373d3f">0.0</text><line x1="849.80" y1="721.20" x2="849.80" y2="724.70" stroke="#e0e0e0" stroke-width="1"/><line x1="884.77" y1="721.20" x2="884.77" y2="724.70" stroke="#e0e0e0" stroke-width="1"/><line x1="919.74" y1="721.20" x2="919.74" y2="724.70" stroke="#e0e0e0" stroke-width="1"/><line x1="954.71" y1="721.20" x2="954.71" y2="724.70" stroke="#e0e0e0" stroke-width="1"/><line x1="989.68" y1="721.20" x2="989.68" y2="724.70" stroke="#e0e0e0" stroke-width="1"/><line x1="1024.65" y1="721.20" x2="1024.65" y2="724.70" stroke="#e0e0e0" stroke-width="1"/><line x1="1059.62" y1="721.20" x2="1059.62" y2="724.70" stroke="#e0e0e0" stroke-width="1"/><line x1="1094.58" y1="721.20" x2="1094.58" y2="724.70" stroke="#e0e0e0" stroke-width="1"/><line x1="1129.55" y1="721.20" x2="1129.55" y2="724.70" stroke="#e0e0e0" stroke-width="1"/><line x1="1164.52" y1="721.20" x2="1164.52" y2="724.70" stroke="#e0e0e0" stroke-width="1"/><line x1="1199.49" y1="721.20" x2="1199.49" y2="724.70" stroke="#e0e0e0" stroke-width="1"/><line x1="1234.46" y1="721.20" x2="1234.46" y2="724.70" stroke="#e0e0e0" stroke-width="1"/><line x1="1269.43" y1="721.20" x2="1269.43" y2="724.70" stroke="#e0e0e0" stroke-width="1"/><line x1="1304.40" y1="721.20" x2="1304.40" y2="724.70" stroke="#e0e0e0" stroke-width="1"/><line x1="849.80" y1="718.70" x2="1304.40" y2="718.70" stroke="#20bd78" stroke-width="2"/><circle cx="849.80" cy="718.70" r="4.5" fill="#20bd78" stroke="#fff" stroke-width="1.5"/><text x="849.80" y="740.10" text-anchor="middle" font-size="11" font-family="Liberation Sans" fill="#373d3f">30 Jun</text><circle cx="882.27" cy="718.70" r="4.5" fill="#20bd78" stroke="#fff" stroke-width="1.5"/><circle cx="914.74" cy="718.70" r="4.5" fill="#20bd78" stroke="#fff" stroke-width="1.5"/><text x="914.74" y="740.10" text-anchor="middle" font-size="11" font-family="Liberation Sans" fill="#373d3f">01 Jul</text><circle cx="947.21" cy="718.70" r="4.5" fill="#20bd78" stroke="#fff" stroke-width="1.5"/><text x="947.21" y="740.10" text-anchor="middle" font-size="11" font-family="Liberation Sans" fill="#373d3f">02 Jul</text><circle cx="979.69" cy="718.70" r="4.5" fill="#20bd78" stroke="#fff" stroke-width="1.5"/><text x="979.69" y="740.10" text-anchor="middle" font-size="11" font-family="Liberation Sans" fill="#373d3f">02 Jul</text><circle cx="1012.16" cy="718.70" r="4.5" fill="#20bd78" stroke="#fff" stroke-width="1.5"/><text x="1012.16" y="740.10" text-anchor="middle" font-size="11" font-family="Liberation Sans" fill="#373d3f">03 Jul</text><circle cx="1044.63" cy="718.70" r="4.5" fill="#20bd78" stroke="#fff" stroke-width="1.5"/><text x="1044.63" y="740.10" text-anchor="middle" font-size="11" font-family="Liberation Sans" fill="#373d3f">03 Jul</text><circle cx="1077.10" cy="718.70" r="4.5" fill="#20bd78" stroke="#fff" stroke-width="1.5"/><text x="1077.10" y="740.10" text-anchor="middle" font-size="11" font-family="Liberation Sans" fill="#373d3f">04 Jul</text><circle cx="1109.57" cy="718.70" r="4.5" fill="#20bd78" stroke="#fff" stroke-width="1.5"/><text x="1109.57" y="740.10" text-anchor="middle" font-size="11" font-family="Liberation Sans" fill="#373d3f">04 Jul</text><circle cx="1142.04" cy="718.70" r="4.5" fill="#20bd78" stroke="#fff" stroke-width="1.5"/><text x="1142.04" y="740.10" text-anchor="middle" font-size="11" font-family="Liberation Sans" fill="#373d3f">05 Jul</text><circle cx="1174.51" cy="718.70" r="4.5" fill="#20bd78" stroke="#fff" stroke-width="1.5"/><text x="1174.51" y="740.10" text-anchor="middle" font-size="11" font-family="Liberation Sans" fill="#373d3f">05 Jul</text><circle cx="1206.99" cy="718.70" r="4.5" fill="#20bd78" stroke="#fff" stroke-width="1.5"/><text x="1206.99" y="740.10" text-anchor="middle" font-size="11" font-family="Liberation Sans" fill="#373d3f">05 Jul</text><circle cx="1239.46" cy="718.70" r="4.5" fill="#20bd78" stroke="#fff" stroke-width="1.5"/><text x="1239.46" y="740.10" text-anchor="middle" font-size="11" font-family="Liberation Sans" fill="#373d3f">06 Jul</text><circle cx="1271.93" cy="718.70" r="4.5" fill="#20bd78" stroke="#fff" stroke-width="1.5"/><text x="1271.93" y="740.10" text-anchor="middle" font-size="11" font-family="Liberation Sans" fill="#373d3f">06 Jul</text><circle cx="1304.40" cy="718.70" r="4.5" fill="#20bd78" stroke="#fff" stroke-width="1.5"/><text x="1304.40" y="740.10" text-anchor="middle" font-size="11" font-family="Liberation Sans" fill="#373d3f">07 Jul</text></svg><div style="position:absolute;left:1364.30px;top:330.50px;font:normal 14.79px/19px 'Liberation Sans',sans-serif;color:#4f4b6d;letter-spacing:0px;white-space:nowrap;-webkit-text-stroke:0.3px #4f4b6d;">Returning Customer Rate</div>
<div style="position:absolute;right:41.60px;top:331.10px;font:normal 13.63px/18px 'Liberation Sans',sans-serif;color:#4f4b6d;letter-spacing:0px;white-space:nowrap;-webkit-text-stroke:0.25px #4f4b6d;">0%</div>
<div style="position:absolute;left:1364.30px;top:389.40px;font:normal 12.2px/16px 'Liberation Sans',sans-serif;color:#4f4b6d;letter-spacing:-0.42px;white-space:nowrap;">CUSTOMERS OVER TIME</div>
<svg style="position:absolute;left:1766.70px;top:423.80px" width="108" height="15" viewBox="0 0 108 15">
<circle cx="5.8" cy="6.4" r="5.1" stroke="#6e8192" stroke-width="1.2" fill="none"/><path d="M5.8 3.6V9.2M3 6.4H8.6" stroke="#6e8192" stroke-width="1.2"/>
<circle cx="23" cy="6.4" r="5.1" stroke="#6e8192" stroke-width="1.2" fill="none"/><path d="M20.2 6.4H25.8" stroke="#6e8192" stroke-width="1.2"/>
<circle cx="41.2" cy="5.3" r="3.9" stroke="#1a83f0" stroke-width="1.5" fill="none"/><path d="M44 8.2L48.2 12.2" stroke="#1a83f0" stroke-width="1.7" stroke-linecap="round"/><path d="M41.2 3.6V7M39.5 5.3H42.9" stroke="#1a83f0" stroke-width="1.1"/>
<path d="M55.5 8.5L57.8 11.2C58.8 12.5 59.8 12.8 61.2 12.8H63C64.5 12.8 65.3 11.8 65.3 10.3V2.8C65.3 1.8 64 1.8 64 2.8V1.8C64 0.8 62.5 0.8 62.5 1.8V1.3C62.5 0.3 61 0.3 61 1.3V1.8C61 0.8 59.5 0.8 59.5 1.8V8L58 7C57 6.3 55.5 7.3 55.5 8.5Z" stroke="#6e8192" stroke-width="0.9" fill="#eef1f4"/>
<path d="M60.7 2V7M62.2 1.5V7M63.7 2V7" stroke="#6e8192" stroke-width="0.6"/>
<path d="M74.2 6.6L81 0.6L87.8 6.6H85.9V12.3H83V8.6H79V12.3H76.1V6.6Z" fill="#6e8192"/>
<path d="M92 2.4H105.5M92 6.1H105.5M92 9.8H105.5" stroke="#6e8192" stroke-width="1.5"/>
</svg><svg style="position:absolute;left:0;top:0;overflow:visible" width="1" height="1"><line x1="1401.10" y1="445.30" x2="1855.70" y2="445.30" stroke="#e3e3e3" stroke-width="1"/><text x="1392.30" y="446.60" text-anchor="end" font-size="10" font-family="Liberation Sans" fill="#373d3f">2.0</text><line x1="1401.10" y1="497.40" x2="1855.70" y2="497.40" stroke="#e3e3e3" stroke-width="1"/><text x="1392.30" y="498.70" text-anchor="end" font-size="10" font-family="Liberation Sans" fill="#373d3f">1.6</text><line x1="1401.10" y1="549.50" x2="1855.70" y2="549.50" stroke="#e3e3e3" stroke-width="1"/><text x="1392.30" y="550.80" text-anchor="end" font-size="10" font-family="Liberation Sans" fill="#373d3f">1.2</text><line x1="1401.10" y1="601.60" x2="1855.70" y2="601.60" stroke="#e3e3e3" stroke-width="1"/><text x="1392.30" y="602.90" text-anchor="end" font-size="10" font-family="Liberation Sans" fill="#373d3f">0.8</text><line x1="1401.10" y1="653.70" x2="1855.70" y2="653.70" stroke="#e3e3e3" stroke-width="1"/><text x="1392.30" y="655.00" text-anchor="end" font-size="10" font-family="Liberation Sans" fill="#373d3f">0.4</text><text x="1392.30" y="707.10" text-anchor="end" font-size="10" font-family="Liberation Sans" fill="#373d3f">0.0</text><line x1="1401.10" y1="708.30" x2="1401.10" y2="711.80" stroke="#e0e0e0" stroke-width="1"/><line x1="1436.07" y1="708.30" x2="1436.07" y2="711.80" stroke="#e0e0e0" stroke-width="1"/><line x1="1471.04" y1="708.30" x2="1471.04" y2="711.80" stroke="#e0e0e0" stroke-width="1"/><line x1="1506.01" y1="708.30" x2="1506.01" y2="711.80" stroke="#e0e0e0" stroke-width="1"/><line x1="1540.98" y1="708.30" x2="1540.98" y2="711.80" stroke="#e0e0e0" stroke-width="1"/><line x1="1575.95" y1="708.30" x2="1575.95" y2="711.80" stroke="#e0e0e0" stroke-width="1"/><line x1="1610.92" y1="708.30" x2="1610.92" y2="711.80" stroke="#e0e0e0" stroke-width="1"/><line x1="1645.88" y1="708.30" x2="1645.88" y2="711.80" stroke="#e0e0e0" stroke-width="1"/><line x1="1680.85" y1="708.30" x2="1680.85" y2="711.80" stroke="#e0e0e0" stroke-width="1"/><line x1="1715.82" y1="708.30" x2="1715.82" y2="711.80" stroke="#e0e0e0" stroke-width="1"/><line x1="1750.79" y1="708.30" x2="1750.79" y2="711.80" stroke="#e0e0e0" stroke-width="1"/><line x1="1785.76" y1="708.30" x2="1785.76" y2="711.80" stroke="#e0e0e0" stroke-width="1"/><line x1="1820.73" y1="708.30" x2="1820.73" y2="711.80" stroke="#e0e0e0" stroke-width="1"/><line x1="1855.70" y1="708.30" x2="1855.70" y2="711.80" stroke="#e0e0e0" stroke-width="1"/><line x1="1401.10" y1="705.80" x2="1855.70" y2="705.80" stroke="#9b5ce6" stroke-width="2"/><circle cx="1401.10" cy="705.80" r="4.5" fill="#9b5ce6" stroke="#fff" stroke-width="1.5"/><text x="1401.10" y="727.20" text-anchor="middle" font-size="11" font-family="Liberation Sans" fill="#373d3f">30 Jun</text><circle cx="1433.57" cy="705.80" r="4.5" fill="#9b5ce6" stroke="#fff" stroke-width="1.5"/><circle cx="1466.04" cy="705.80" r="4.5" fill="#9b5ce6" stroke="#fff" stroke-width="1.5"/><text x="1466.04" y="727.20" text-anchor="middle" font-size="11" font-family="Liberation Sans" fill="#373d3f">01 Jul</text><circle cx="1498.51" cy="705.80" r="4.5" fill="#9b5ce6" stroke="#fff" stroke-width="1.5"/><text x="1498.51" y="727.20" text-anchor="middle" font-size="11" font-family="Liberation Sans" fill="#373d3f">02 Jul</text><circle cx="1530.99" cy="705.80" r="4.5" fill="#9b5ce6" stroke="#fff" stroke-width="1.5"/><text x="1530.99" y="727.20" text-anchor="middle" font-size="11" font-family="Liberation Sans" fill="#373d3f">02 Jul</text><circle cx="1563.46" cy="705.80" r="4.5" fill="#9b5ce6" stroke="#fff" stroke-width="1.5"/><text x="1563.46" y="727.20" text-anchor="middle" font-size="11" font-family="Liberation Sans" fill="#373d3f">03 Jul</text><circle cx="1595.93" cy="705.80" r="4.5" fill="#9b5ce6" stroke="#fff" stroke-width="1.5"/><text x="1595.93" y="727.20" text-anchor="middle" font-size="11" font-family="Liberation Sans" fill="#373d3f">03 Jul</text><circle cx="1628.40" cy="705.80" r="4.5" fill="#9b5ce6" stroke="#fff" stroke-width="1.5"/><text x="1628.40" y="727.20" text-anchor="middle" font-size="11" font-family="Liberation Sans" fill="#373d3f">04 Jul</text><circle cx="1660.87" cy="705.80" r="4.5" fill="#9b5ce6" stroke="#fff" stroke-width="1.5"/><text x="1660.87" y="727.20" text-anchor="middle" font-size="11" font-family="Liberation Sans" fill="#373d3f">04 Jul</text><circle cx="1693.34" cy="705.80" r="4.5" fill="#9b5ce6" stroke="#fff" stroke-width="1.5"/><text x="1693.34" y="727.20" text-anchor="middle" font-size="11" font-family="Liberation Sans" fill="#373d3f">05 Jul</text><circle cx="1725.81" cy="705.80" r="4.5" fill="#9b5ce6" stroke="#fff" stroke-width="1.5"/><text x="1725.81" y="727.20" text-anchor="middle" font-size="11" font-family="Liberation Sans" fill="#373d3f">05 Jul</text><circle cx="1758.29" cy="705.80" r="4.5" fill="#9b5ce6" stroke="#fff" stroke-width="1.5"/><text x="1758.29" y="727.20" text-anchor="middle" font-size="11" font-family="Liberation Sans" fill="#373d3f">05 Jul</text><circle cx="1790.76" cy="705.80" r="4.5" fill="#9b5ce6" stroke="#fff" stroke-width="1.5"/><text x="1790.76" y="727.20" text-anchor="middle" font-size="11" font-family="Liberation Sans" fill="#373d3f">06 Jul</text><circle cx="1823.23" cy="705.80" r="4.5" fill="#9b5ce6" stroke="#fff" stroke-width="1.5"/><text x="1823.23" y="727.20" text-anchor="middle" font-size="11" font-family="Liberation Sans" fill="#373d3f">06 Jul</text><circle cx="1855.70" cy="705.80" r="4.5" fill="#9b5ce6" stroke="#fff" stroke-width="1.5"/><text x="1855.70" y="727.20" text-anchor="middle" font-size="11" font-family="Liberation Sans" fill="#373d3f">07 Jul</text></svg><div style="position:absolute;left:262.60px;top:813.50px;font:normal 14.57px/19px 'Liberation Sans',sans-serif;color:#4f4b6d;letter-spacing:0px;white-space:nowrap;-webkit-text-stroke:0.3px #4f4b6d;">Average Order Value</div>
<div style="position:absolute;right:1144.10px;top:812.60px;font:normal 16.0px/21px 'Liberation Sans',sans-serif;color:#4f4b6d;letter-spacing:0px;white-space:nowrap;-webkit-text-stroke:0.25px #4f4b6d;">$0</div>
<div style="position:absolute;left:262.60px;top:855.30px;font:normal 12.2px/16px 'Liberation Sans',sans-serif;color:#4f4b6d;letter-spacing:-0.42px;white-space:nowrap;">ORDER VALUE OVER TIME</div>
<svg style="position:absolute;left:664.10px;top:889.70px" width="108" height="15" viewBox="0 0 108 15">
<circle cx="5.8" cy="6.4" r="5.1" stroke="#6e8192" stroke-width="1.2" fill="none"/><path d="M5.8 3.6V9.2M3 6.4H8.6" stroke="#6e8192" stroke-width="1.2"/>
<circle cx="23" cy="6.4" r="5.1" stroke="#6e8192" stroke-width="1.2" fill="none"/><path d="M20.2 6.4H25.8" stroke="#6e8192" stroke-width="1.2"/>
<circle cx="41.2" cy="5.3" r="3.9" stroke="#1a83f0" stroke-width="1.5" fill="none"/><path d="M44 8.2L48.2 12.2" stroke="#1a83f0" stroke-width="1.7" stroke-linecap="round"/><path d="M41.2 3.6V7M39.5 5.3H42.9" stroke="#1a83f0" stroke-width="1.1"/>
<path d="M55.5 8.5L57.8 11.2C58.8 12.5 59.8 12.8 61.2 12.8H63C64.5 12.8 65.3 11.8 65.3 10.3V2.8C65.3 1.8 64 1.8 64 2.8V1.8C64 0.8 62.5 0.8 62.5 1.8V1.3C62.5 0.3 61 0.3 61 1.3V1.8C61 0.8 59.5 0.8 59.5 1.8V8L58 7C57 6.3 55.5 7.3 55.5 8.5Z" stroke="#6e8192" stroke-width="0.9" fill="#eef1f4"/>
<path d="M60.7 2V7M62.2 1.5V7M63.7 2V7" stroke="#6e8192" stroke-width="0.6"/>
<path d="M74.2 6.6L81 0.6L87.8 6.6H85.9V12.3H83V8.6H79V12.3H76.1V6.6Z" fill="#6e8192"/>
<path d="M92 2.4H105.5M92 6.1H105.5M92 9.8H105.5" stroke="#6e8192" stroke-width="1.5"/>
</svg><svg style="position:absolute;left:0;top:0;overflow:visible" width="1" height="1"><line x1="298.50" y1="911.20" x2="753.10" y2="911.20" stroke="#e3e3e3" stroke-width="1"/><text x="289.70" y="912.50" text-anchor="end" font-size="10" font-family="Liberation Sans" fill="#373d3f">2.0</text><line x1="298.50" y1="963.30" x2="753.10" y2="963.30" stroke="#e3e3e3" stroke-width="1"/><text x="289.70" y="964.60" text-anchor="end" font-size="10" font-family="Liberation Sans" fill="#373d3f">1.6</text><line x1="298.50" y1="1015.40" x2="753.10" y2="1015.40" stroke="#e3e3e3" stroke-width="1"/><text x="289.70" y="1016.70" text-anchor="end" font-size="10" font-family="Liberation Sans" fill="#373d3f">1.2</text><line x1="298.50" y1="1067.50" x2="753.10" y2="1067.50" stroke="#e3e3e3" stroke-width="1"/><text x="289.70" y="1068.80" text-anchor="end" font-size="10" font-family="Liberation Sans" fill="#373d3f">0.8</text><line x1="298.50" y1="1119.60" x2="753.10" y2="1119.60" stroke="#e3e3e3" stroke-width="1"/><text x="289.70" y="1120.90" text-anchor="end" font-size="10" font-family="Liberation Sans" fill="#373d3f">0.4</text><text x="289.70" y="1173.00" text-anchor="end" font-size="10" font-family="Liberation Sans" fill="#373d3f">0.0</text><line x1="298.50" y1="1174.20" x2="298.50" y2="1177.70" stroke="#e0e0e0" stroke-width="1"/><line x1="333.47" y1="1174.20" x2="333.47" y2="1177.70" stroke="#e0e0e0" stroke-width="1"/><line x1="368.44" y1="1174.20" x2="368.44" y2="1177.70" stroke="#e0e0e0" stroke-width="1"/><line x1="403.41" y1="1174.20" x2="403.41" y2="1177.70" stroke="#e0e0e0" stroke-width="1"/><line x1="438.38" y1="1174.20" x2="438.38" y2="1177.70" stroke="#e0e0e0" stroke-width="1"/><line x1="473.35" y1="1174.20" x2="473.35" y2="1177.70" stroke="#e0e0e0" stroke-width="1"/><line x1="508.32" y1="1174.20" x2="508.32" y2="1177.70" stroke="#e0e0e0" stroke-width="1"/><line x1="543.28" y1="1174.20" x2="543.28" y2="1177.70" stroke="#e0e0e0" stroke-width="1"/><line x1="578.25" y1="1174.20" x2="578.25" y2="1177.70" stroke="#e0e0e0" stroke-width="1"/><line x1="613.22" y1="1174.20" x2="613.22" y2="1177.70" stroke="#e0e0e0" stroke-width="1"/><line x1="648.19" y1="1174.20" x2="648.19" y2="1177.70" stroke="#e0e0e0" stroke-width="1"/><line x1="683.16" y1="1174.20" x2="683.16" y2="1177.70" stroke="#e0e0e0" stroke-width="1"/><line x1="718.13" y1="1174.20" x2="718.13" y2="1177.70" stroke="#e0e0e0" stroke-width="1"/><line x1="753.10" y1="1174.20" x2="753.10" y2="1177.70" stroke="#e0e0e0" stroke-width="1"/><line x1="298.50" y1="1171.70" x2="753.10" y2="1171.70" stroke="#0b57f7" stroke-width="2"/><circle cx="298.50" cy="1171.70" r="4.5" fill="#0b57f7" stroke="#fff" stroke-width="1.5"/><text x="298.50" y="1193.10" text-anchor="middle" font-size="11" font-family="Liberation Sans" fill="#373d3f">30 Jun</text><circle cx="330.97" cy="1171.70" r="4.5" fill="#0b57f7" stroke="#fff" stroke-width="1.5"/><circle cx="363.44" cy="1171.70" r="4.5" fill="#0b57f7" stroke="#fff" stroke-width="1.5"/><text x="363.44" y="1193.10" text-anchor="middle" font-size="11" font-family="Liberation Sans" fill="#373d3f">01 Jul</text><circle cx="395.91" cy="1171.70" r="4.5" fill="#0b57f7" stroke="#fff" stroke-width="1.5"/><text x="395.91" y="1193.10" text-anchor="middle" font-size="11" font-family="Liberation Sans" fill="#373d3f">02 Jul</text><circle cx="428.39" cy="1171.70" r="4.5" fill="#0b57f7" stroke="#fff" stroke-width="1.5"/><text x="428.39" y="1193.10" text-anchor="middle" font-size="11" font-family="Liberation Sans" fill="#373d3f">02 Jul</text><circle cx="460.86" cy="1171.70" r="4.5" fill="#0b57f7" stroke="#fff" stroke-width="1.5"/><text x="460.86" y="1193.10" text-anchor="middle" font-size="11" font-family="Liberation Sans" fill="#373d3f">03 Jul</text><circle cx="493.33" cy="1171.70" r="4.5" fill="#0b57f7" stroke="#fff" stroke-width="1.5"/><text x="493.33" y="1193.10" text-anchor="middle" font-size="11" font-family="Liberation Sans" fill="#373d3f">03 Jul</text><circle cx="525.80" cy="1171.70" r="4.5" fill="#0b57f7" stroke="#fff" stroke-width="1.5"/><text x="525.80" y="1193.10" text-anchor="middle" font-size="11" font-family="Liberation Sans" fill="#373d3f">04 Jul</text><circle cx="558.27" cy="1171.70" r="4.5" fill="#0b57f7" stroke="#fff" stroke-width="1.5"/><text x="558.27" y="1193.10" text-anchor="middle" font-size="11" font-family="Liberation Sans" fill="#373d3f">04 Jul</text><circle cx="590.74" cy="1171.70" r="4.5" fill="#0b57f7" stroke="#fff" stroke-width="1.5"/><text x="590.74" y="1193.10" text-anchor="middle" font-size="11" font-family="Liberation Sans" fill="#373d3f">05 Jul</text><circle cx="623.21" cy="1171.70" r="4.5" fill="#0b57f7" stroke="#fff" stroke-width="1.5"/><text x="623.21" y="1193.10" text-anchor="middle" font-size="11" font-family="Liberation Sans" fill="#373d3f">05 Jul</text><circle cx="655.69" cy="1171.70" r="4.5" fill="#0b57f7" stroke="#fff" stroke-width="1.5"/><text x="655.69" y="1193.10" text-anchor="middle" font-size="11" font-family="Liberation Sans" fill="#373d3f">05 Jul</text><circle cx="688.16" cy="1171.70" r="4.5" fill="#0b57f7" stroke="#fff" stroke-width="1.5"/><text x="688.16" y="1193.10" text-anchor="middle" font-size="11" font-family="Liberation Sans" fill="#373d3f">06 Jul</text><circle cx="720.63" cy="1171.70" r="4.5" fill="#0b57f7" stroke="#fff" stroke-width="1.5"/><text x="720.63" y="1193.10" text-anchor="middle" font-size="11" font-family="Liberation Sans" fill="#373d3f">06 Jul</text><circle cx="753.10" cy="1171.70" r="4.5" fill="#0b57f7" stroke="#fff" stroke-width="1.5"/><text x="753.10" y="1193.10" text-anchor="middle" font-size="11" font-family="Liberation Sans" fill="#373d3f">07 Jul</text></svg><div style="position:absolute;left:813.60px;top:812.10px;font:normal 14.71px/19px 'Liberation Sans',sans-serif;color:#4f4b6d;letter-spacing:0px;white-space:nowrap;-webkit-text-stroke:0.3px #4f4b6d;">Total Order</div>
<div style="position:absolute;right:592.80px;top:812.30px;font:normal 14.4px/19px 'Liberation Sans',sans-serif;color:#4f4b6d;letter-spacing:0px;white-space:nowrap;-webkit-text-stroke:0.25px #4f4b6d;">0</div>
<div style="position:absolute;left:813.60px;top:853.10px;font:normal 12.2px/16px 'Liberation Sans',sans-serif;color:#4f4b6d;letter-spacing:-0.42px;white-space:nowrap;">ORDER OVER TIME</div>
<svg style="position:absolute;left:1215.40px;top:888.00px" width="108" height="15" viewBox="0 0 108 15">
<circle cx="5.8" cy="6.4" r="5.1" stroke="#6e8192" stroke-width="1.2" fill="none"/><path d="M5.8 3.6V9.2M3 6.4H8.6" stroke="#6e8192" stroke-width="1.2"/>
<circle cx="23" cy="6.4" r="5.1" stroke="#6e8192" stroke-width="1.2" fill="none"/><path d="M20.2 6.4H25.8" stroke="#6e8192" stroke-width="1.2"/>
<circle cx="41.2" cy="5.3" r="3.9" stroke="#1a83f0" stroke-width="1.5" fill="none"/><path d="M44 8.2L48.2 12.2" stroke="#1a83f0" stroke-width="1.7" stroke-linecap="round"/><path d="M41.2 3.6V7M39.5 5.3H42.9" stroke="#1a83f0" stroke-width="1.1"/>
<path d="M55.5 8.5L57.8 11.2C58.8 12.5 59.8 12.8 61.2 12.8H63C64.5 12.8 65.3 11.8 65.3 10.3V2.8C65.3 1.8 64 1.8 64 2.8V1.8C64 0.8 62.5 0.8 62.5 1.8V1.3C62.5 0.3 61 0.3 61 1.3V1.8C61 0.8 59.5 0.8 59.5 1.8V8L58 7C57 6.3 55.5 7.3 55.5 8.5Z" stroke="#6e8192" stroke-width="0.9" fill="#eef1f4"/>
<path d="M60.7 2V7M62.2 1.5V7M63.7 2V7" stroke="#6e8192" stroke-width="0.6"/>
<path d="M74.2 6.6L81 0.6L87.8 6.6H85.9V12.3H83V8.6H79V12.3H76.1V6.6Z" fill="#6e8192"/>
<path d="M92 2.4H105.5M92 6.1H105.5M92 9.8H105.5" stroke="#6e8192" stroke-width="1.5"/>
</svg><svg style="position:absolute;left:0;top:0;overflow:visible" width="1" height="1"><line x1="849.80" y1="909.50" x2="1304.40" y2="909.50" stroke="#e3e3e3" stroke-width="1"/><text x="841.00" y="910.80" text-anchor="end" font-size="10" font-family="Liberation Sans" fill="#373d3f">2.0</text><line x1="849.80" y1="961.60" x2="1304.40" y2="961.60" stroke="#e3e3e3" stroke-width="1"/><text x="841.00" y="962.90" text-anchor="end" font-size="10" font-family="Liberation Sans" fill="#373d3f">1.6</text><line x1="849.80" y1="1013.70" x2="1304.40" y2="1013.70" stroke="#e3e3e3" stroke-width="1"/><text x="841.00" y="1015.00" text-anchor="end" font-size="10" font-family="Liberation Sans" fill="#373d3f">1.2</text><line x1="849.80" y1="1065.80" x2="1304.40" y2="1065.80" stroke="#e3e3e3" stroke-width="1"/><text x="841.00" y="1067.10" text-anchor="end" font-size="10" font-family="Liberation Sans" fill="#373d3f">0.8</text><line x1="849.80" y1="1117.90" x2="1304.40" y2="1117.90" stroke="#e3e3e3" stroke-width="1"/><text x="841.00" y="1119.20" text-anchor="end" font-size="10" font-family="Liberation Sans" fill="#373d3f">0.4</text><text x="841.00" y="1171.30" text-anchor="end" font-size="10" font-family="Liberation Sans" fill="#373d3f">0.0</text><line x1="849.80" y1="1172.50" x2="849.80" y2="1176.00" stroke="#e0e0e0" stroke-width="1"/><line x1="884.77" y1="1172.50" x2="884.77" y2="1176.00" stroke="#e0e0e0" stroke-width="1"/><line x1="919.74" y1="1172.50" x2="919.74" y2="1176.00" stroke="#e0e0e0" stroke-width="1"/><line x1="954.71" y1="1172.50" x2="954.71" y2="1176.00" stroke="#e0e0e0" stroke-width="1"/><line x1="989.68" y1="1172.50" x2="989.68" y2="1176.00" stroke="#e0e0e0" stroke-width="1"/><line x1="1024.65" y1="1172.50" x2="1024.65" y2="1176.00" stroke="#e0e0e0" stroke-width="1"/><line x1="1059.62" y1="1172.50" x2="1059.62" y2="1176.00" stroke="#e0e0e0" stroke-width="1"/><line x1="1094.58" y1="1172.50" x2="1094.58" y2="1176.00" stroke="#e0e0e0" stroke-width="1"/><line x1="1129.55" y1="1172.50" x2="1129.55" y2="1176.00" stroke="#e0e0e0" stroke-width="1"/><line x1="1164.52" y1="1172.50" x2="1164.52" y2="1176.00" stroke="#e0e0e0" stroke-width="1"/><line x1="1199.49" y1="1172.50" x2="1199.49" y2="1176.00" stroke="#e0e0e0" stroke-width="1"/><line x1="1234.46" y1="1172.50" x2="1234.46" y2="1176.00" stroke="#e0e0e0" stroke-width="1"/><line x1="1269.43" y1="1172.50" x2="1269.43" y2="1176.00" stroke="#e0e0e0" stroke-width="1"/><line x1="1304.40" y1="1172.50" x2="1304.40" y2="1176.00" stroke="#e0e0e0" stroke-width="1"/><line x1="849.80" y1="1170.00" x2="1304.40" y2="1170.00" stroke="#20bd78" stroke-width="2"/><circle cx="849.80" cy="1170.00" r="4.5" fill="#20bd78" stroke="#fff" stroke-width="1.5"/><text x="849.80" y="1191.40" text-anchor="middle" font-size="11" font-family="Liberation Sans" fill="#373d3f">30 Jun</text><circle cx="882.27" cy="1170.00" r="4.5" fill="#20bd78" stroke="#fff" stroke-width="1.5"/><circle cx="914.74" cy="1170.00" r="4.5" fill="#20bd78" stroke="#fff" stroke-width="1.5"/><text x="914.74" y="1191.40" text-anchor="middle" font-size="11" font-family="Liberation Sans" fill="#373d3f">01 Jul</text><circle cx="947.21" cy="1170.00" r="4.5" fill="#20bd78" stroke="#fff" stroke-width="1.5"/><text x="947.21" y="1191.40" text-anchor="middle" font-size="11" font-family="Liberation Sans" fill="#373d3f">02 Jul</text><circle cx="979.69" cy="1170.00" r="4.5" fill="#20bd78" stroke="#fff" stroke-width="1.5"/><text x="979.69" y="1191.40" text-anchor="middle" font-size="11" font-family="Liberation Sans" fill="#373d3f">02 Jul</text><circle cx="1012.16" cy="1170.00" r="4.5" fill="#20bd78" stroke="#fff" stroke-width="1.5"/><text x="1012.16" y="1191.40" text-anchor="middle" font-size="11" font-family="Liberation Sans" fill="#373d3f">03 Jul</text><circle cx="1044.63" cy="1170.00" r="4.5" fill="#20bd78" stroke="#fff" stroke-width="1.5"/><text x="1044.63" y="1191.40" text-anchor="middle" font-size="11" font-family="Liberation Sans" fill="#373d3f">03 Jul</text><circle cx="1077.10" cy="1170.00" r="4.5" fill="#20bd78" stroke="#fff" stroke-width="1.5"/><text x="1077.10" y="1191.40" text-anchor="middle" font-size="11" font-family="Liberation Sans" fill="#373d3f">04 Jul</text><circle cx="1109.57" cy="1170.00" r="4.5" fill="#20bd78" stroke="#fff" stroke-width="1.5"/><text x="1109.57" y="1191.40" text-anchor="middle" font-size="11" font-family="Liberation Sans" fill="#373d3f">04 Jul</text><circle cx="1142.04" cy="1170.00" r="4.5" fill="#20bd78" stroke="#fff" stroke-width="1.5"/><text x="1142.04" y="1191.40" text-anchor="middle" font-size="11" font-family="Liberation Sans" fill="#373d3f">05 Jul</text><circle cx="1174.51" cy="1170.00" r="4.5" fill="#20bd78" stroke="#fff" stroke-width="1.5"/><text x="1174.51" y="1191.40" text-anchor="middle" font-size="11" font-family="Liberation Sans" fill="#373d3f">05 Jul</text><circle cx="1206.99" cy="1170.00" r="4.5" fill="#20bd78" stroke="#fff" stroke-width="1.5"/><text x="1206.99" y="1191.40" text-anchor="middle" font-size="11" font-family="Liberation Sans" fill="#373d3f">05 Jul</text><circle cx="1239.46" cy="1170.00" r="4.5" fill="#20bd78" stroke="#fff" stroke-width="1.5"/><text x="1239.46" y="1191.40" text-anchor="middle" font-size="11" font-family="Liberation Sans" fill="#373d3f">06 Jul</text><circle cx="1271.93" cy="1170.00" r="4.5" fill="#20bd78" stroke="#fff" stroke-width="1.5"/><text x="1271.93" y="1191.40" text-anchor="middle" font-size="11" font-family="Liberation Sans" fill="#373d3f">06 Jul</text><circle cx="1304.40" cy="1170.00" r="4.5" fill="#20bd78" stroke="#fff" stroke-width="1.5"/><text x="1304.40" y="1191.40" text-anchor="middle" font-size="11" font-family="Liberation Sans" fill="#373d3f">07 Jul</text></svg><div style="position:absolute;left:1364.30px;top:811.90px;font:normal 14.9px/19px 'Liberation Sans',sans-serif;color:#4f4b6d;letter-spacing:0px;white-space:nowrap;-webkit-text-stroke:0.3px #4f4b6d;">Retention</div>
<div style="position:absolute;right:41.60px;top:812.70px;font:normal 13.63px/18px 'Liberation Sans',sans-serif;color:#4f4b6d;letter-spacing:0px;white-space:nowrap;-webkit-text-stroke:0.25px #4f4b6d;">0%</div>
<div style="position:absolute;left:1364.30px;top:852.70px;font:normal 12.2px/16px 'Liberation Sans',sans-serif;color:#4f4b6d;letter-spacing:-0.42px;white-space:nowrap;">ORDER OVER TIME</div>
<svg style="position:absolute;left:1766.70px;top:886.90px" width="108" height="15" viewBox="0 0 108 15">
<circle cx="5.8" cy="6.4" r="5.1" stroke="#6e8192" stroke-width="1.2" fill="none"/><path d="M5.8 3.6V9.2M3 6.4H8.6" stroke="#6e8192" stroke-width="1.2"/>
<circle cx="23" cy="6.4" r="5.1" stroke="#6e8192" stroke-width="1.2" fill="none"/><path d="M20.2 6.4H25.8" stroke="#6e8192" stroke-width="1.2"/>
<circle cx="41.2" cy="5.3" r="3.9" stroke="#1a83f0" stroke-width="1.5" fill="none"/><path d="M44 8.2L48.2 12.2" stroke="#1a83f0" stroke-width="1.7" stroke-linecap="round"/><path d="M41.2 3.6V7M39.5 5.3H42.9" stroke="#1a83f0" stroke-width="1.1"/>
<path d="M55.5 8.5L57.8 11.2C58.8 12.5 59.8 12.8 61.2 12.8H63C64.5 12.8 65.3 11.8 65.3 10.3V2.8C65.3 1.8 64 1.8 64 2.8V1.8C64 0.8 62.5 0.8 62.5 1.8V1.3C62.5 0.3 61 0.3 61 1.3V1.8C61 0.8 59.5 0.8 59.5 1.8V8L58 7C57 6.3 55.5 7.3 55.5 8.5Z" stroke="#6e8192" stroke-width="0.9" fill="#eef1f4"/>
<path d="M60.7 2V7M62.2 1.5V7M63.7 2V7" stroke="#6e8192" stroke-width="0.6"/>
<path d="M74.2 6.6L81 0.6L87.8 6.6H85.9V12.3H83V8.6H79V12.3H76.1V6.6Z" fill="#6e8192"/>
<path d="M92 2.4H105.5M92 6.1H105.5M92 9.8H105.5" stroke="#6e8192" stroke-width="1.5"/>
</svg><svg style="position:absolute;left:0;top:0;overflow:visible" width="1" height="1"><line x1="1401.10" y1="908.40" x2="1855.70" y2="908.40" stroke="#e3e3e3" stroke-width="1"/><text x="1392.30" y="909.70" text-anchor="end" font-size="10" font-family="Liberation Sans" fill="#373d3f">2.0</text><line x1="1401.10" y1="960.50" x2="1855.70" y2="960.50" stroke="#e3e3e3" stroke-width="1"/><text x="1392.30" y="961.80" text-anchor="end" font-size="10" font-family="Liberation Sans" fill="#373d3f">1.6</text><line x1="1401.10" y1="1012.60" x2="1855.70" y2="1012.60" stroke="#e3e3e3" stroke-width="1"/><text x="1392.30" y="1013.90" text-anchor="end" font-size="10" font-family="Liberation Sans" fill="#373d3f">1.2</text><line x1="1401.10" y1="1064.70" x2="1855.70" y2="1064.70" stroke="#e3e3e3" stroke-width="1"/><text x="1392.30" y="1066.00" text-anchor="end" font-size="10" font-family="Liberation Sans" fill="#373d3f">0.8</text><line x1="1401.10" y1="1116.80" x2="1855.70" y2="1116.80" stroke="#e3e3e3" stroke-width="1"/><text x="1392.30" y="1118.10" text-anchor="end" font-size="10" font-family="Liberation Sans" fill="#373d3f">0.4</text><text x="1392.30" y="1170.20" text-anchor="end" font-size="10" font-family="Liberation Sans" fill="#373d3f">0.0</text><line x1="1401.10" y1="1171.40" x2="1401.10" y2="1174.90" stroke="#e0e0e0" stroke-width="1"/><line x1="1436.07" y1="1171.40" x2="1436.07" y2="1174.90" stroke="#e0e0e0" stroke-width="1"/><line x1="1471.04" y1="1171.40" x2="1471.04" y2="1174.90" stroke="#e0e0e0" stroke-width="1"/><line x1="1506.01" y1="1171.40" x2="1506.01" y2="1174.90" stroke="#e0e0e0" stroke-width="1"/><line x1="1540.98" y1="1171.40" x2="1540.98" y2="1174.90" stroke="#e0e0e0" stroke-width="1"/><line x1="1575.95" y1="1171.40" x2="1575.95" y2="1174.90" stroke="#e0e0e0" stroke-width="1"/><line x1="1610.92" y1="1171.40" x2="1610.92" y2="1174.90" stroke="#e0e0e0" stroke-width="1"/><line x1="1645.88" y1="1171.40" x2="1645.88" y2="1174.90" stroke="#e0e0e0" stroke-width="1"/><line x1="1680.85" y1="1171.40" x2="1680.85" y2="1174.90" stroke="#e0e0e0" stroke-width="1"/><line x1="1715.82" y1="1171.40" x2="1715.82" y2="1174.90" stroke="#e0e0e0" stroke-width="1"/><line x1="1750.79" y1="1171.40" x2="1750.79" y2="1174.90" stroke="#e0e0e0" stroke-width="1"/><line x1="1785.76" y1="1171.40" x2="1785.76" y2="1174.90" stroke="#e0e0e0" stroke-width="1"/><line x1="1820.73" y1="1171.40" x2="1820.73" y2="1174.90" stroke="#e0e0e0" stroke-width="1"/><line x1="1855.70" y1="1171.40" x2="1855.70" y2="1174.90" stroke="#e0e0e0" stroke-width="1"/><line x1="1401.10" y1="1168.90" x2="1855.70" y2="1168.90" stroke="#9b5ce6" stroke-width="2"/><circle cx="1401.10" cy="1168.90" r="4.5" fill="#9b5ce6" stroke="#fff" stroke-width="1.5"/><text x="1401.10" y="1190.30" text-anchor="middle" font-size="11" font-family="Liberation Sans" fill="#373d3f">30 Jun</text><circle cx="1433.57" cy="1168.90" r="4.5" fill="#9b5ce6" stroke="#fff" stroke-width="1.5"/><circle cx="1466.04" cy="1168.90" r="4.5" fill="#9b5ce6" stroke="#fff" stroke-width="1.5"/><text x="1466.04" y="1190.30" text-anchor="middle" font-size="11" font-family="Liberation Sans" fill="#373d3f">01 Jul</text><circle cx="1498.51" cy="1168.90" r="4.5" fill="#9b5ce6" stroke="#fff" stroke-width="1.5"/><text x="1498.51" y="1190.30" text-anchor="middle" font-size="11" font-family="Liberation Sans" fill="#373d3f">02 Jul</text><circle cx="1530.99" cy="1168.90" r="4.5" fill="#9b5ce6" stroke="#fff" stroke-width="1.5"/><text x="1530.99" y="1190.30" text-anchor="middle" font-size="11" font-family="Liberation Sans" fill="#373d3f">02 Jul</text><circle cx="1563.46" cy="1168.90" r="4.5" fill="#9b5ce6" stroke="#fff" stroke-width="1.5"/><text x="1563.46" y="1190.30" text-anchor="middle" font-size="11" font-family="Liberation Sans" fill="#373d3f">03 Jul</text><circle cx="1595.93" cy="1168.90" r="4.5" fill="#9b5ce6" stroke="#fff" stroke-width="1.5"/><text x="1595.93" y="1190.30" text-anchor="middle" font-size="11" font-family="Liberation Sans" fill="#373d3f">03 Jul</text><circle cx="1628.40" cy="1168.90" r="4.5" fill="#9b5ce6" stroke="#fff" stroke-width="1.5"/><text x="1628.40" y="1190.30" text-anchor="middle" font-size="11" font-family="Liberation Sans" fill="#373d3f">04 Jul</text><circle cx="1660.87" cy="1168.90" r="4.5" fill="#9b5ce6" stroke="#fff" stroke-width="1.5"/><text x="1660.87" y="1190.30" text-anchor="middle" font-size="11" font-family="Liberation Sans" fill="#373d3f">04 Jul</text><circle cx="1693.34" cy="1168.90" r="4.5" fill="#9b5ce6" stroke="#fff" stroke-width="1.5"/><text x="1693.34" y="1190.30" text-anchor="middle" font-size="11" font-family="Liberation Sans" fill="#373d3f">05 Jul</text><circle cx="1725.81" cy="1168.90" r="4.5" fill="#9b5ce6" stroke="#fff" stroke-width="1.5"/><text x="1725.81" y="1190.30" text-anchor="middle" font-size="11" font-family="Liberation Sans" fill="#373d3f">05 Jul</text><circle cx="1758.29" cy="1168.90" r="4.5" fill="#9b5ce6" stroke="#fff" stroke-width="1.5"/><text x="1758.29" y="1190.30" text-anchor="middle" font-size="11" font-family="Liberation Sans" fill="#373d3f">05 Jul</text><circle cx="1790.76" cy="1168.90" r="4.5" fill="#9b5ce6" stroke="#fff" stroke-width="1.5"/><text x="1790.76" y="1190.30" text-anchor="middle" font-size="11" font-family="Liberation Sans" fill="#373d3f">06 Jul</text><circle cx="1823.23" cy="1168.90" r="4.5" fill="#9b5ce6" stroke="#fff" stroke-width="1.5"/><text x="1823.23" y="1190.30" text-anchor="middle" font-size="11" font-family="Liberation Sans" fill="#373d3f">06 Jul</text><circle cx="1855.70" cy="1168.90" r="4.5" fill="#9b5ce6" stroke="#fff" stroke-width="1.5"/><text x="1855.70" y="1190.30" text-anchor="middle" font-size="11" font-family="Liberation Sans" fill="#373d3f">07 Jul</text></svg><div style="position:absolute;left:340px;top:1004px;width:1200px;height:40px;border-radius:20px;background:#ddd;box-shadow:0 0 60px 20px rgba(0,0,0,0.10)"></div><div style="position:absolute;left:1893px;top:64px;width:22px;height:910px;background:linear-gradient(90deg,rgba(0,0,0,0.012),rgba(255,255,255,0.5))"></div><div style="position:absolute;left:1915px;top:64px;width:5px;height:910px;background:#f0f0f0"></div><div style="position:absolute;left:1915px;top:64px;width:5px;height:354px;background:#c1c1c1;border-radius:3px 0 0 3px"></div><div style="position:absolute;left:1850.5px;top:910px;width:50px;height:50px;border-radius:50%;background:linear-gradient(160deg,#f26076 0%,#e64c78 55%,#b5459c 100%);box-shadow:0 2px 6px rgba(0,0,0,0.18)"><svg style="position:absolute;left:12px;top:13px" width="27" height="25" viewBox="0 0 27 25"><path d="M2 5A3 3 0 0 1 5 2H18A3 3 0 0 1 21 5V15A3 3 0 0 1 18 18H13.5L11 21.5L8.5 18H5A3 3 0 0 1 2 15Z" fill="#fff"/><path d="M7 0.8H20A3.5 3.5 0 0 1 23.5 4.3V14" stroke="#fff" stroke-width="1.8" fill="none"/></svg></div><div style="position:absolute;left:0;top:0;width:3px;height:974px;background:#000"></div><div style="position:absolute;left:4px;top:0;width:1px;height:974px;background:#111"></div><div style="position:absolute;left:-1.5px;top:156px;width:259.5px;height:81px;border:6px solid #ff0000"></div></body></html>
